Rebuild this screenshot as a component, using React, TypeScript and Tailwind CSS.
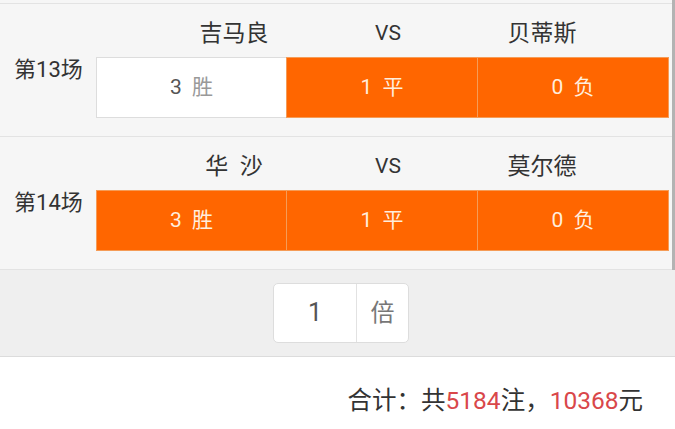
import React from 'react';

interface Match {
  no: number;
  home: string;
  away: string;
  picks: boolean[]; // 胜 平 负 selected
}

const matches: Match[] = [
  { no: 13, home: '吉马良', away: '贝蒂斯', picks: [false, true, true] },
  { no: 14, home: '华\u2002沙', away: '莫尔德', picks: [true, true, true] },
];

const options = [
  { odds: '3', label: '胜' },
  { odds: '1', label: '平' },
  { odds: '0', label: '负' },
];

const font = { fontFamily: 'Roboto, "Noto Sans CJK SC", sans-serif' };

const MatchRow: React.FC<{ match: Match }> = ({ match }) => (
  <div className="flex items-center border-b border-[#e3e3e3] bg-[#f6f6f6]">
    <div className="w-[96px] shrink-0 pl-[14px] text-[22px] leading-none text-[#333]">第{match.no}场</div>
    <div className="flex-1 pt-[16px] pr-[6px] pb-[18px]">
      {/* team names */}
      <div className="ml-[61px] grid h-[26px] w-[462px] grid-cols-3 items-center text-center text-[#333]">
        <span className="text-[23px] leading-none">{match.home}</span>
        <span className="text-[21px] leading-none">VS</span>
        <span className="text-[23px] leading-none">{match.away}</span>
      </div>
      {/* picks */}
      <div className="mt-[11px] grid h-[61px] grid-cols-3">
        {options.map((opt, i) => {
          const on = match.picks[i];
          return (
            <div
              key={opt.label}
              className={
                'flex items-center justify-center text-[21px] leading-none ' +
                (i > 0 ? '-ml-px ' : '') +
                (on ? 'z-10 border border-[#f59c57] bg-[#ff6600] text-[#ffeedd]' : 'border border-[#dddddd] bg-white')
              }
            >
              <span className={on ? '' : 'text-[#555]'}>{opt.odds}</span>
              <span className={'ml-[10px] ' + (on ? '' : 'text-[#999]')}>{opt.label}</span>
            </div>
          );
        })}
      </div>
    </div>
  </div>
);

export default function App() {
  return (
    <div className="relative h-[429px] w-full overflow-hidden bg-white" style={font}>
      <div className="h-[4px] border-b border-[#e3e3e3] bg-[#f6f6f6]" />
      {matches.map(m => (
        <MatchRow key={m.no} match={m} />
      ))}

      {/* multiplier */}
      <div className="border-b border-[#dcdcdc] bg-[#efefef] pt-[13px] pb-[13px] pl-[273px]">
        <div className="flex h-[60px] w-[136px] overflow-hidden rounded-[5px] border border-[#dddddd] bg-white">
          <div className="flex w-[83px] items-center justify-center border-r border-[#e2e2e2] text-[25px] text-[#555]">1</div>
          <div className="flex flex-1 items-center justify-center text-[24px] text-[#777]">倍</div>
        </div>
      </div>

      {/* total */}
      <div className="flex justify-end pt-[32px] pr-[32px] text-[24.5px] leading-none text-[#333]">
        <span>
          合计：共<span className="text-[#d9474a]">5184</span>注，<span className="text-[#d9474a]">10368</span>元
        </span>
      </div>

      {/* overlay scrollbar */}
      <div className="absolute top-0 right-0 h-[270px] w-[3px] bg-[#b3b3b3]" />
    </div>
  );
}
